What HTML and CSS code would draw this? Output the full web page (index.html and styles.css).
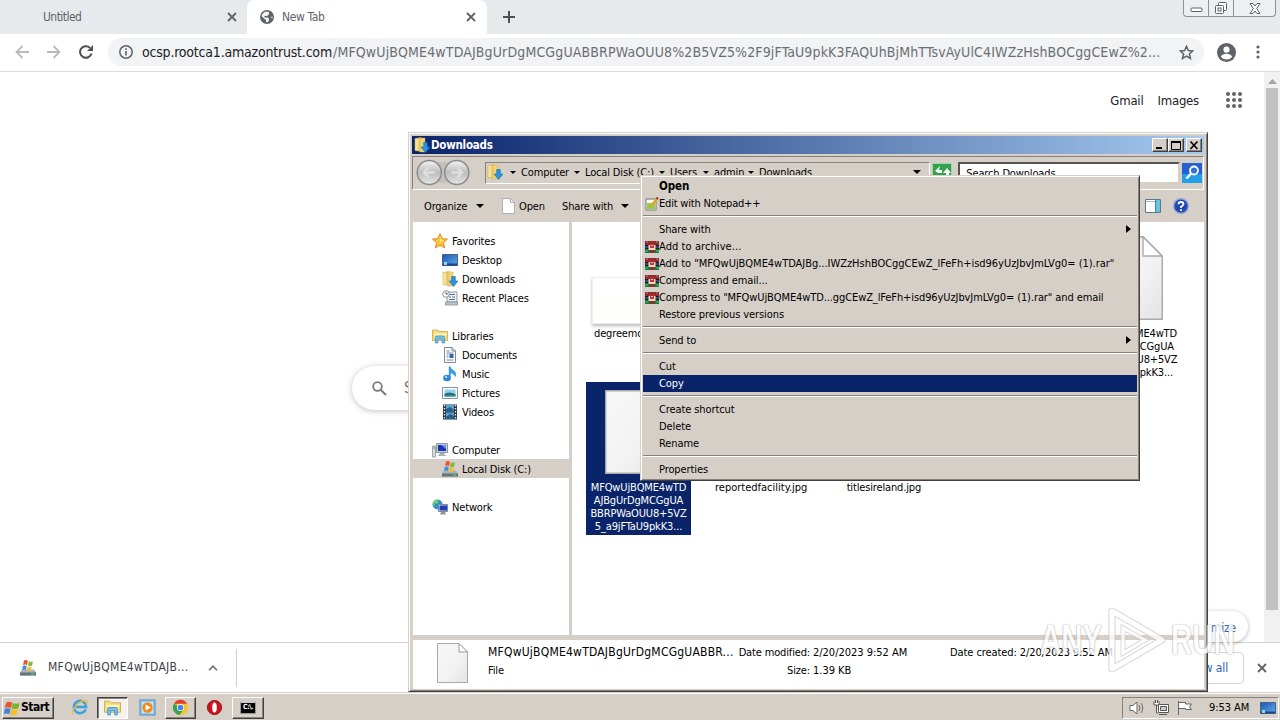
FILE: index.html
```html
<!DOCTYPE html>
<html lang="en">
<head>
<meta charset="utf-8">
<title>New Tab</title>
<link rel="stylesheet" href="styles.css">
</head>
<body>
<svg class="defs" width="0" height="0">
  <defs>
    <linearGradient id="paper" x1="0" y1="0" x2="1" y2="1"><stop offset="0" stop-color="#f8f8f8"/><stop offset=".6" stop-color="#f2f2f2"/><stop offset="1" stop-color="#e3e3e3"/></linearGradient>
    <linearGradient id="fold" x1="0" y1="0" x2="1" y2="0"><stop offset="0" stop-color="#fdf3b4"/><stop offset="1" stop-color="#e2bd4e"/></linearGradient>
    <linearGradient id="screen" x1="0" y1="0" x2="1" y2="1"><stop offset="0" stop-color="#1c55b0"/><stop offset="1" stop-color="#5aaef0"/></linearGradient>
    <linearGradient id="nav" x1="0" y1="0" x2="0" y2="1"><stop offset="0" stop-color="#f4f4f4"/><stop offset=".5" stop-color="#bdbdbd"/><stop offset="1" stop-color="#e6e6e6"/></linearGradient>
    <symbol id="i-down" viewBox="0 0 16 16"><path d="M1 1.500 7 .5v14l-6-1z" fill="url(#fold)" stroke="#c9a545" stroke-width=".6"/><path d="M6 1h5v14H6z" fill="#f0d57b" stroke="#d0ab48" stroke-width=".5"/><path d="M9.700 5.500h3.600V10H16l-4.500 5.500L7 10h2.700z" fill="#2b93e0" stroke="#1766ae" stroke-width=".6"/></symbol>
    <symbol id="i-star" viewBox="0 0 16 16"><path d="M8 .7l2.200 4.900 5.300.5-4 3.600 1.200 5.300L8 12.200 3.300 15l1.200-5.300-4-3.600 5.300-.5z" fill="#ffc337" stroke="#e08a20"/><path d="M8 3.500 9.300 7l3 .3L8 9z" fill="#ffe896"/></symbol>
    <symbol id="i-desk" viewBox="0 0 16 16"><path d="M.5 2.500h15v11H.5z" fill="url(#screen)" stroke="#49627f"/><path d="M1 11.500h14v2H1z" fill="#1c4687"/><path d="M2 10h3v3H2z" fill="#9cd0ef"/></symbol>
    <symbol id="i-recent" viewBox="0 0 16 16"><path d="M5 2h10v10H5z" fill="#eef2f5" stroke="#8d99a5"/><path d="M7 4.500h6M7 7h2m1 0h3M7 9.500h6" stroke="#5d7183"/><path d="M3.500 12h12v3h-12z" fill="#bcc8d0" stroke="#7b8791" stroke-width=".7"/><circle cx="4" cy="4" r="3.300" fill="#fff" stroke="#8b96a0"/><path d="M4 2v2h2" fill="none" stroke="#555"/></symbol>
    <symbol id="i-lib" viewBox="0 0 16 16"><path d="M.5 2h5l1.500 1.500h8.500v9H.5z" fill="#f5dc83" stroke="#c9a446" stroke-width=".8"/><path d="M2 5.500h13v2H2z" fill="#fff3b8"/><path d="M3.500 15V9.500q0-1.500 1.500-1.500h6q1.500 0 1.500 1.500V15H10v-4H6v4z" fill="#6fc0ee" stroke="#3b8cc4" stroke-width=".7"/></symbol>
    <symbol id="i-doc" viewBox="0 0 16 16"><path d="M2.500.5H10L13.500 4v11.500h-11z" fill="#fff" stroke="#7e8b98"/><path d="M10 .5V4h3.500M4.500 4h3m-3 2h7m-7 2h2m-2 2h2m-2 3h7" fill="none" stroke="#6d8499"/><path d="M7.500 7h4v4h-4z" fill="#2f63b0"/></symbol>
    <symbol id="i-music" viewBox="0 0 16 16"><ellipse cx="5" cy="12" rx="3.900" ry="3.300" fill="#2f87d2"/><path d="M6.800 12V.5h1.500q.7 2.500 3.700 4 3.500 2.500 1 7 0-3-4.200-4.500v5z" fill="#3b9be0"/><circle cx="4" cy="11" r="1.200" fill="#a4d8f7"/></symbol>
    <symbol id="i-pic" viewBox="0 0 16 16"><path d="M.5 2.500h15v11H.5z" fill="#fff" stroke="#8394a2"/><path d="M2.500 4.500h11v7h-11z" fill="#8bd0ee"/><path d="M2.500 9q4-3 11 0v2.500h-11z" fill="#286d79"/><path d="M2.500 10.500h11v1h-11z" fill="#53a6a3"/></symbol>
    <symbol id="i-vid" viewBox="0 0 16 16"><path d="M1 .5h14v15H1z" fill="#26333c"/><path d="M4 1h8v6.500H4zM4 8.500h8V15H4z" fill="#58a5d5"/><path d="M4 5l4-2 4 3v1.500H4zM4 13l4-3 4 2v3H4z" fill="#295f86"/><path d="M2.500 1v14M13.500 1v14" stroke="#dfe7ea" stroke-width="1.400" stroke-dasharray="1.500 1.500"/></symbol>
    <symbol id="i-comp" viewBox="0 0 16 16"><path d="M.5 4h3v11h-3z" fill="#d6dadd" stroke="#838b92" stroke-width=".7"/><path d="M1 6h2" stroke="#45b545"/><path d="M4.500 1.500h11v9h-11z" fill="#c9ced3" stroke="#8d959d"/><path d="M6 3h8v6H6z" fill="#1934b8"/><path d="M9 3h5v4z" fill="#5f90ee"/><path d="M8 11h4l2 3H6z" fill="#aab2b9"/></symbol>
    <symbol id="i-disk" viewBox="0 0 16 16"><path d="M2 9.500h12l2 3v3H0v-3z" fill="#a5b2b9"/><path d="M0 12.500h16v3H0z" fill="#65757d"/><path d="M11 14h3" stroke="#55e06a"/><path d="M4 .5q2-1 4 .3L7 5Q5 4 3 5z" fill="#e9572b"/><path d="M9 1.200q2 1 4 0L12 5.500q-2 1-4 0z" fill="#7cb935"/><path d="M2.800 6q2-1 4 0L6 10q-2-1-4 0z" fill="#3c8fdb"/><path d="M7.700 6.500q2 1 4 0l-1 4q-2 1-4 0z" fill="#f6bd29"/></symbol>
    <symbol id="i-net" viewBox="0 0 16 16"><circle cx="5.500" cy="5.500" r="5" fill="#2c8fd0"/><path d="M2 2q3-2 5 0L5 5 3 4 2 8Q0 5 2 2z" fill="#6fd05c"/><path d="M6.500 5.500h9v7h-9z" fill="#d7dce2" stroke="#7e8995"/><path d="M7.500 6.500H15v5H7.500z" fill="#1b3fc0"/><path d="M9 13h4l1 2.500H8z" fill="#8c97a3"/></symbol>
    <symbol id="i-rar" viewBox="0 0 14 14"><path d="M0 1h14v4H0z" fill="#a01f35"/><path d="M0 5h14v4H0z" fill="#2b4a80"/><path d="M0 9h14v4H0z" fill="#167a42"/><path d="M0 5.500h14M0 8.500h14" stroke="#1c1c1c"/><path d="M4.500 1h5v12h-5z" fill="#8a3225"/><path d="M3.500 5h7v5h-7z" fill="#f0d9c5"/><path d="M5 3h1v5H5zm3 0h1v5H8zM6 6h2v2H6z" fill="#d02f30"/><path d="M1 2h2M11 2h2M0 11h3m8 0h3" stroke="#49c06c"/></symbol>
    <symbol id="i-file" viewBox="0 0 67 84"><path d="M.7.7H47L66.300 20v63.300H.7z" fill="url(#paper)" stroke="#a9a9a9" stroke-width="1.400"/><path d="M47 1v19h19z" fill="#fff" stroke="#aaa" stroke-width="1.400"/></symbol>
    <symbol id="i-x" viewBox="0 0 10 10"><path d="M1 1l8 8M9 1 1 9" stroke="#5f6368" stroke-width="1.800"/></symbol>
    <symbol id="i-flag" viewBox="0 0 18 18"><path d="M2.500 3q3.300-2 6.800 0L7.800 9Q4 7.300.8 9z" fill="#e9552b"/><path d="M10 3.500q3.500 1.700 7.500 0L16 9.500q-4 1.500-7.500 0z" fill="#78b72d"/><path d="M.8 10q3.300-1.700 6.700 0L6 16q-3-1.700-6 0z" fill="#3b85d8"/><path d="M8.300 10.500q3.500 1.700 7.400 0L14 16.500q-4 1.500-7.300 0z" fill="#f8bd25"/></symbol>
  </defs>
</svg>

<div class="screen">
  <header class="tabs">
    <div class="tab first"><span class="tab-name t-unt">Untitled</span><svg class="x"><use href="#i-x"/></svg></div>
    <div class="tab active">
      <svg class="globe" viewBox="0 0 14 14"><circle cx="7" cy="7" r="7" fill="#5f6368"/><path d="M6 1.500 9 2v2.500L7 6H4.500v1.500H8L9 9v1.500L7.500 12.500 6 12V10L4 8.500 1.500 6Q2 3 6 1.500zM10.500 7l2-.5v2z" fill="#fff" opacity=".92"/></svg>
      <span class="tab-name">New Tab</span><svg class="x"><use href="#i-x"/></svg>
    </div>
    <svg class="plus" viewBox="0 0 12 12"><path d="M6 0v12M0 6h12" stroke="#4d5156" stroke-width="2"/></svg>
    <div class="caption">
      <span class="c1"><svg width="13" height="6"><rect x="1" y="1" width="11" height="3.500" rx="1" fill="#fff" stroke="#5b626b"/></svg></span>
      <span class="c2"><svg width="14" height="14" fill="#fff" stroke="#5b626b"><rect x="4.500" y="1.500" width="8" height="8" rx="1"/><rect x="1.500" y="4.500" width="8" height="8" rx="1"/><rect x="4" y="7" width="3" height="3"/></svg></span>
      <span class="c3"><svg width="12" height="11" viewBox="0 0 12 11"><path d="M1 .5h3l2 2.500 2-2.500h3L7.700 5.500 11 10.500H8L6 8l-2 2.500H1l3.300-5z" fill="#fff" stroke="#5b626b"/></svg></span>
    </div>
  </header>

  <div class="toolbar">
    <svg class="tb back" viewBox="0 0 14 14"><path d="M14 7H1.500M7.500 1 1.500 7l6 6" fill="none" stroke="#b8babd" stroke-width="1.800"/></svg>
    <svg class="tb fwd" viewBox="0 0 14 14"><path d="M0 7h12.500M6.500 1l6 6-6 6" fill="none" stroke="#b8babd" stroke-width="1.800"/></svg>
    <svg class="tb reload" viewBox="0 0 14 14"><path d="M12.500 8.500A5.800 5.800 0 1 1 11 2.900" fill="none" stroke="#4d5156" stroke-width="2"/><path d="M14 0v6H8z" fill="#4d5156"/></svg>
    <div class="omni">
      <svg class="info" viewBox="0 0 14 14"><circle cx="7" cy="7" r="6.200" fill="none" stroke="#5f6368" stroke-width="1.500"/><path d="M7 6v4.500M7 3.300v1.600" stroke="#5f6368" stroke-width="1.600"/></svg>
      <span class="url"><span class="host">ocsp.rootca1.amazontrust.com</span><span class="path">/MFQwUjBQME4wTDAJBgUrDgMCGgUABBRPWaOUU8%2B5VZ5%2F9jFTaU9pkK3FAQUhBjMhTTsvAyUlC4IWZzHshBOCggCEwZ%2...</span></span>
      <svg class="bm" viewBox="0 0 14 14"><path d="M7 1.200l1.700 3.900 4.200.4-3.200 2.800 1 4.200L7 10.300l-3.700 2.200 1-4.200L1.100 5.500l4.200-.4z" fill="none" stroke="#5f6368" stroke-width="1.400"/></svg>
    </div>
    <svg class="user" viewBox="0 0 18 18"><circle cx="9" cy="9" r="9" fill="#5f6368"/><circle cx="9" cy="6.300" r="2.900" fill="#fff"/><path d="M3.500 13Q5 10.200 9 10.200t5.500 2.800Q12.500 15.600 9 15.600T3.500 13z" fill="#fff"/></svg>
    <svg class="dots" viewBox="0 0 4 14" fill="#5f6368"><circle cx="2" cy="2" r="1.600"/><circle cx="2" cy="7" r="1.600"/><circle cx="2" cy="12" r="1.600"/></svg>
  </div>

  <main class="page">
    <div class="ntp">
      <div class="links"><span>Gmail</span><span>Images</span>
        <svg class="apps" viewBox="0 0 16 16" fill="#5f6368"><circle cx="2" cy="2" r="2"/><circle cx="8" cy="2" r="2"/><circle cx="14" cy="2" r="2"/><circle cx="2" cy="8" r="2"/><circle cx="8" cy="8" r="2"/><circle cx="14" cy="8" r="2"/><circle cx="2" cy="14" r="2"/><circle cx="8" cy="14" r="2"/><circle cx="14" cy="14" r="2"/></svg>
      </div>
      <div class="search"><svg width="15" height="15" viewBox="0 0 15 15"><circle cx="5.500" cy="5.500" r="4.300" fill="none" stroke="#777b80" stroke-width="1.800"/><path d="M8.700 8.700 14 14" stroke="#777b80" stroke-width="2"/></svg><span>S</span></div>
      <div class="customize">mize</div>
    </div>
    <div class="scroll"><svg width="9" height="5"><path d="M4.500 0 9 5H0z" fill="#a3a3a3"/></svg><div class="thumb"></div></div>
  </main>

  <div class="shelf">
    <svg class="s-ico"><use href="#i-disk"/></svg>
    <span class="s-name">MFQwUjBQME4wTDAJB...</span>
    <svg class="chev" viewBox="0 0 10 6"><path d="M1 5.200 5 1.200l4 4" fill="none" stroke="#6b6f74" stroke-width="1.600"/></svg>
    <span class="s-div"></span>
    <span class="showall">Show all</span>
    <svg class="s-x"><use href="#i-x"/></svg>
  </div>

  <footer class="taskbar">
    <div class="start"><svg><use href="#i-flag"/></svg><b>Start</b></div>
    <div class="task flat"><svg viewBox="0 0 18 18"><path d="M15.500 11A6.500 6.500 0 1 1 16 8.500H5" fill="none" stroke="#37a3e3" stroke-width="2.600"/><path d="M2 16Q-.5 14 5 7.500T16 2q1.500.8.300 4" fill="none" stroke="#efb92f" stroke-width="1.400"/></svg></div>
    <div class="task pressed"><svg><use href="#i-lib"/></svg></div>
    <div class="task flat wmp"><svg viewBox="0 0 18 18"><rect x="1" y="1" width="16" height="16" fill="#8cc4ea" stroke="#4f8fc0"/><rect x="3" y="3" width="12" height="12" fill="#c9e3f5"/><circle cx="9" cy="9" r="5.500" fill="#f28b1d"/><path d="M7 5.700 12.500 9 7 12.300z" fill="#fff"/></svg></div>
    <div class="task up"><svg viewBox="0 0 18 18"><circle cx="9" cy="9" r="8" fill="#fbc51d"/><path d="M9 9 2 5a8 8 0 0 0 6 12l4-6z" fill="#35a552"/><path d="M2 5a8 8 0 0 1 14 0H9z" fill="#e1402f"/><circle cx="9" cy="9" r="3.800" fill="#fff"/><circle cx="9" cy="9" r="3" fill="#4586ee"/></svg></div>
    <div class="task flat opera"><svg viewBox="0 0 18 18"><circle cx="9" cy="9" r="7.500" fill="#cc1420" stroke="#93101a"/><ellipse cx="9" cy="9" rx="2.400" ry="5.400" fill="#fff"/></svg></div>
    <div class="task up cmdt"><span class="cmd">C:\.</span></div>
    <div class="tray">
      <svg class="ty1" viewBox="0 0 16 16" fill="#fff" stroke="#666"><path d="M1 5.500h3L8 2v12l-4-3.500H1z"/><path d="M10 5q2 3 0 6m2-8q3.500 5 0 10" fill="none"/></svg>
      <svg class="ty2" viewBox="0 0 16 16" fill="#fff" stroke="#555"><path d="M5.500 4.500h10v8h-10z"/><path d="M7.500 6.500h6v4h-6z" fill="#ccc"/><path d="M6 14.500h8M1 1v4h5V1M3.500 5v8h2M2.500 0v3m2-3v3" /></svg>
      <svg class="ty3" viewBox="0 0 16 16" fill="#fff" stroke="#666"><path d="M1.500 1v14M1.500 2.500h7v1.500h6l-2 3 2 2.500h-6v-1h-7z"/></svg>
      <span class="time">9:53 AM</span>
      <svg class="ty4"><use href="#i-desk"/></svg>
    </div>
  </footer>

  <section class="win">
    <div class="title"><svg><use href="#i-down"/></svg><b>Downloads</b>
      <i class="wb"><svg width="10" height="9"><path d="M1 7h6" stroke="#000" stroke-width="2"/></svg></i><i class="wb"><svg width="10" height="9"><path d="M.5.500v8h9v-8" fill="none" stroke="#000"/><path d="M0 1h10" stroke="#000" stroke-width="2"/></svg></i><i class="wb close"><svg width="10" height="9"><path d="M1.500.5l7 7.500M8.500.5l-7 7.500" stroke="#000" stroke-width="1.600"/></svg></i>
    </div>
    <div class="addr">
      <svg class="bf" viewBox="0 0 56 28"><rect x="10" y="3" width="36" height="21" fill="#c3c0bb"/><circle cx="13.500" cy="13.500" r="12.300" fill="url(#nav)" stroke="#8a8a8a" stroke-width="1.500"/><circle cx="41.500" cy="13.500" r="12.300" fill="url(#nav)" stroke="#8a8a8a" stroke-width="1.500"/><path d="M19 13.500H8m5-5-5 5 5 5M36 13.500h11m-5-5 5 5-5 5" fill="none" stroke="#dedede" stroke-width="2.400"/></svg>
      <div class="crumbs"><svg class="ci"><use href="#i-down"/></svg><i class="dd"></i><span class="k1">Computer</span><i class="dd"></i><span class="k2">Local Disk (C:)</span><i class="dd"></i><span class="k3">Users</span><i class="dd"></i><span class="k4">admin</span><i class="dd"></i><span class="k5">Downloads</span><i class="dd big"></i></div>
      <svg class="go" viewBox="0 0 20 20"><rect width="20" height="20" fill="#2fa24b"/><rect x=".5" y=".5" width="19" height="19" fill="none" stroke="#9ed8a8"/><path d="M3 8l5-5-1 4h3v3H6zM11 10l4-5 4 5h-2v4h-3v-4z" fill="#fff"/></svg>
      <div class="sbox">Search Downloads</div>
      <svg class="mag" viewBox="0 0 20 20"><rect width="20" height="20" fill="#2460d2"/><path d="M0 11h20v9H0z" fill="#249ee6"/><circle cx="12" cy="7.500" r="4" fill="#3a70dd" stroke="#fff" stroke-width="1.800"/><path d="M9 10.500 4.500 15.500" stroke="#fff" stroke-width="2.400"/></svg>
    </div>
    <div class="cmds"><span class="m1">Organize</span><i class="dd big"></i><svg class="of" viewBox="0 0 13 16"><path d="M.5.5h8l4 4v11H.5z" fill="#fff" stroke="#b0b0b0"/><path d="M8.500.5v4h4" fill="none" stroke="#b0b0b0"/></svg><span class="m2">Open</span><span class="m3">Share with</span><i class="dd big"></i>
      <svg class="pane" viewBox="0 0 16 14"><path d="M.5.5h15v13H.5z" fill="#fff" stroke="#5b7890"/><path d="M1 2.500h9" stroke="#a9bac8"/><path d="M10 1h5v12h-5z" fill="#65c5e2"/><path d="M10.500 1v12" stroke="#4d7d99"/></svg>
      <svg class="help" viewBox="0 0 16 16"><circle cx="8" cy="8" r="7.300" fill="#2447b4" stroke="#8fa4d8" stroke-width="1.400"/><path d="M5.500 6.300Q5.500 4 8 4t2.500 2Q10.500 7.300 8 8.800V10M8 11.200v1.800" fill="none" stroke="#fff" stroke-width="1.800"/></svg>
    </div>
    <div class="body">
      <nav class="side">
        <div class="r"><svg><use href="#i-star"/></svg><span>Favorites</span></div>
        <div class="r s"><svg><use href="#i-desk"/></svg><span>Desktop</span></div>
        <div class="r s"><svg><use href="#i-down"/></svg><span>Downloads</span></div>
        <div class="r s"><svg><use href="#i-recent"/></svg><span>Recent Places</span></div>
        <div class="r gap"><svg><use href="#i-lib"/></svg><span>Libraries</span></div>
        <div class="r s"><svg><use href="#i-doc"/></svg><span>Documents</span></div>
        <div class="r s"><svg><use href="#i-music"/></svg><span>Music</span></div>
        <div class="r s"><svg><use href="#i-pic"/></svg><span>Pictures</span></div>
        <div class="r s"><svg><use href="#i-vid"/></svg><span>Videos</span></div>
        <div class="r gap"><svg><use href="#i-comp"/></svg><span>Computer</span></div>
        <div class="r s sel"><svg><use href="#i-disk"/></svg><span>Local Disk (C:)</span></div>
        <div class="r gap"><svg><use href="#i-net"/></svg><span>Network</span></div>
      </nav>
      <div class="files">
        <div class="f"><div class="pic thumbimg"></div><p>degreemodern.jpg</p></div>
        <div class="f"></div><div class="f"></div><div class="f"></div>
        <div class="f"><svg class="pic"><use href="#i-file"/></svg><p>MFQwUjBQME4wTD<br>AJBgUrDgMCGgUA<br>BBRPWaOUU8+5VZ<br>5_a9jFTaU9pkK3...</p></div>
        <div class="f on"><svg class="pic"><use href="#i-file"/></svg><p>MFQwUjBQME4wTD<br>AJBgUrDgMCGgUA<br>BBRPWaOUU8+5VZ<br>5_a9jFTaU9pkK3...</p></div>
        <div class="f"><div class="pic"></div><p class="wide">reportedfacility.jpg</p></div>
        <div class="f"><div class="pic"></div><p>titlesireland.jpg</p></div>
      </div>
    </div>
    <div class="details">
      <svg class="df" viewBox="0 0 31 40"><path d="M.5.500H22L30.500 9v30.500H.5z" fill="url(#paper)" stroke="#a9a9a9"/><path d="M22 .5V9h8.500z" fill="#fff" stroke="#999"/></svg>
      <div class="d1"><p class="n1">MFQwUjBQME4wTDAJBgUrDgMCGgUABBR...</p><p>File</p></div>
      <div class="d2"><p>Date modified:</p><p>Size:</p></div>
      <div class="d3"><p>2/20/2023 9:52 AM</p><p>1.39 KB</p></div>
      <div class="d4"><p>Date created: 2/20/2023 9:52 AM</p></div>
    </div>
  </section>

  <div class="menu">
    <div class="mi"><b>Open</b></div>
    <div class="mi"><svg viewBox="0 0 14 14"><path d="M1 2h10v11H1z" fill="#fff" stroke="#777"/><path d="M2 6h8v6H2z" fill="#8fce4a"/><path d="M2 2h8" stroke="#999" stroke-dasharray="1 1"/><path d="M5 10 12 1.500" stroke="#e6a41d" stroke-width="2.200"/><path d="M11.500 2 13 .5" stroke="#a02828" stroke-width="2"/></svg><span class="q2">Edit with Notepad++</span></div>
    <hr>
    <div class="mi"><span>Share with</span><i class="ar"></i></div>
    <div class="mi"><svg><use href="#i-rar"/></svg><span class="q3">Add to archive...</span></div>
    <div class="mi"><svg><use href="#i-rar"/></svg><span class="q4">Add to "MFQwUjBQME4wTDAJBg...IWZzHshBOCggCEwZ_lFeFh+isd96yUzJbvJmLVg0= (1).rar"</span></div>
    <div class="mi"><svg><use href="#i-rar"/></svg><span>Compress and email...</span></div>
    <div class="mi"><svg><use href="#i-rar"/></svg><span>Compress to "MFQwUjBQME4wTD...ggCEwZ_lFeFh+isd96yUzJbvJmLVg0= (1).rar" and email</span></div>
    <div class="mi"><span>Restore previous versions</span></div>
    <hr>
    <div class="mi"><span>Send to</span><i class="ar"></i></div>
    <hr>
    <div class="mi"><span>Cut</span></div>
    <div class="mi hot"><span>Copy</span></div>
    <hr>
    <div class="mi"><span>Create shortcut</span></div>
    <div class="mi"><span>Delete</span></div>
    <div class="mi"><span>Rename</span></div>
    <hr>
    <div class="mi"><span>Properties</span></div>
  </div>

  <div class="mark"><span class="any">ANY</span><svg viewBox="0 0 58 64"><path d="M4 3 54 32 4 61z" fill="none" stroke="#c9c9c9" stroke-width="7" stroke-linejoin="round"/><path d="M4 3 54 32 4 61z" fill="none" stroke="#fff" stroke-width="5" stroke-linejoin="round"/><path d="M15 20 37 32 15 45z" fill="none" stroke="#d2d2d2" stroke-width="5"/><path d="M15 20 37 32 15 45z" fill="none" stroke="#fff" stroke-width="3"/></svg><span class="run">RUN</span></div>
</div>
</body>
</html>
```
FILE: styles.css
```css
* { box-sizing: border-box; }
body { margin: 0; overflow: hidden; }
p { margin: 0; }
i { font-style: normal; }
svg { display: block; flex: none; }
.defs { position: absolute; }
.screen {
  position: relative; width: 1280px; height: 720px; overflow: hidden;
  display: flex; flex-direction: column; background: #fff; color: #000;
  font: 11px/13px "DejaVu Sans Condensed", "DejaVu Sans", sans-serif;
  font-stretch: condensed; letter-spacing: -0.15px; white-space: nowrap;
}

/* Browser tabs */
.tabs { height: 34px; flex: none; display: flex; background: #e7eaed; }
.tab { display: flex; align-items: center; height: 34px; color: #5f6368; font-size: 12px; }
.tab.first { width: 247px; padding: 0 10px 0 43px; }
.tab.active { width: 240px; padding: 0 11px 0 13px; background: #fff; border-radius: 8px 8px 0 0; }
.tab-name { flex: 1; letter-spacing: -0.35px; }
.t-unt { letter-spacing: -0.55px; }
.globe { width: 14px; height: 14px; margin-right: 8px; }
.x { width: 10px; height: 10px; }
.plus { width: 12px; height: 12px; margin: 11px 0 0 16px; }
.caption { margin-left: auto; margin-right: 4px; display: flex; width: 93px; height: 17px; border: 1px solid #8d9299; border-top: 0; border-radius: 0 0 4px 4px; background: #edf0f2; }
.caption span { display: flex; justify-content: center; border-right: 1px solid #8d9299; }
.c1 { width: 25px; padding-top: 7px; } .c2 { width: 25px; padding-top: 1px; }
.caption .c3 { flex: 1; border: 0; padding-top: 3px; }

.toolbar { height: 38px; flex: none; display: flex; align-items: center; padding-bottom: 1px; border-bottom: 1px solid #d9dbdd; }
.tb { width: 14px; height: 14px; }
.back { margin-left: 15px; } .fwd { margin-left: 18px; } .reload { margin-left: 18px; }
.omni { width: 1096px; height: 28px; margin-left: 15px; border-radius: 14px; background: #f1f3f4; display: flex; align-items: center; padding-left: 11px; }
.info { width: 14px; height: 14px; margin-right: 9px; }
.url { width: 1038px; font-size: 14px; line-height: 20px; display: flex; }
.host { letter-spacing: -0.2px; width: 191px; color: #202124; }
.path { color: #6b6f74; letter-spacing: 0.14px; }
.bm { width: 15px; height: 15px; margin-left: -1px; }
.user { width: 19px; height: 19px; margin-left: 13px; }
.dots { width: 4px; height: 14px; margin-left: 20px; }

/* New tab page */
.page { height: 570px; flex: none; display: flex; }
.ntp { flex: 1; position: relative; }
.links { display: flex; justify-content: flex-end; align-items: center; height: 56px; padding-right: 22px; font-size: 13px; letter-spacing: -0.2px; color: #202124; gap: 14px; }
.apps { width: 16px; height: 16px; margin-left: 13px; }
.search { position: absolute; left: 352px; top: 294px; width: 562px; height: 44px; border-radius: 22px; box-shadow: 0 1px 6px rgba(32,33,36,.28); display: flex; align-items: center; padding-left: 20px; gap: 17px; font-size: 15px; color: #757575; }
.customize { position: absolute; right: 16px; bottom: 0; width: 110px; height: 31px; border-radius: 16px; box-shadow: 0 1px 4px rgba(0,0,0,.3); font-size: 12px; line-height: 34px; text-align: right; padding-right: 12px; color: #2765ba; }
.scroll { width: 16px; background: #f1f1f1; padding: 7px 2px 0; display: flex; flex-direction: column; align-items: center; }
.thumb { width: 12px; height: 522px; margin-top: 4px; background: #c1c1c1; }

.shelf { height: 50px; flex: none; border-top: 1px solid #d3d3d3; display: flex; align-items: center; }
.s-ico { width: 16px; height: 16px; margin-left: 20px; }
.s-name { width: 140px; margin-left: 12px; font-size: 12px; letter-spacing: 0.3px; color: #3c4043; }
.chev { width: 10px; height: 6px; margin-left: 20px; }
.s-div { width: 1px; height: 38px; margin-left: 18px; background: #d0d0d0; }
.showall { margin-left: auto; width: 80px; height: 32px; border: 1px solid #d5d7da; border-radius: 4px; color: #2765ba; font-size: 12px; line-height: 30px; text-align: right; padding-right: 15px; }
.s-x { width: 10px; height: 10px; margin: 0 13px; }

/* Taskbar */
.taskbar { height: 28px; flex: none; background: #d6cfc7; border-top: 1px solid #d6cfc7; box-shadow: inset 0 1px #fff; display: flex; align-items: center; padding: 2px 1px 0 2px; }
.start, .up { border: 1px solid; border-color: #fff #404040 #404040 #fff; box-shadow: inset -1px -1px #87827c; }
.start { width: 52px; height: 22px; display: flex; align-items: center; font-size: 12px; letter-spacing: -0.5px; }
.start svg { width: 16px; height: 16px; margin: 0 1px; }
.task { width: 31px; height: 22px; display: flex; align-items: center; justify-content: center; }
.task svg { width: 17px; height: 17px; }
.task.flat { margin-left: 8px; width: 34px; }
.task.pressed { border: 1px solid; border-color: #404040 #fff #fff #404040; box-shadow: inset 1px 1px #87827c; background: #f4f1ee; margin-left: 1px; }
.task.wmp { margin-left: 2px; } .task.up { margin-left: 1px; } .task.opera { margin-left: 1px; } .task.cmdt { width: 32px; margin-left: 1px; }
.cmd { width: 16px; height: 13px; background: #000; border: 1px solid #999; border-top: 2px solid #ccc; color: #fff; font: bold 7px/9px "DejaVu Sans Condensed", sans-serif; letter-spacing: -0.5px; text-align: center; }
.tray { margin-left: auto; width: 157px; height: 22px; border: 1px solid; border-color: #87827c #fff #fff #87827c; display: flex; align-items: center; padding-left: 6px; }
.tray svg { width: 16px; height: 16px; }
.ty2 { margin-left: 8px; } .ty3 { margin-left: 8px; }
.time { width: 41px; margin: 0 10px 0 16px; letter-spacing: -0.05px; }

/* Explorer window */
.win { position: absolute; left: 408px; top: 132px; width: 800px; height: 560px; background: #d6cfc7; border: 1px solid; border-color: #d6cfc7 #404040 #404040 #d6cfc7; box-shadow: inset 1px 1px #fff, inset -1px -1px #87827c; padding: 3px; display: flex; flex-direction: column; }
.title { height: 18px; flex: none; background: linear-gradient(90deg, #0a246a, #a6caf0); color: #fff; display: flex; align-items: center; padding: 0 2px; }
.title svg { width: 16px; height: 16px; }
.title b { flex: 1; margin-left: 1px; letter-spacing: -0.25px; font-size: 11.500px; }
.wb { width: 16px; height: 14px; background: #d6cfc7; border: 1px solid; border-color: #fff #404040 #404040 #fff; box-shadow: inset -1px -1px #87827c; padding: 2px 0 0 2px; }
.wb svg { width: 10px; height: 9px; }
.close { margin-left: 2px; }
.addr { height: 34px; flex: none; margin-top: 2px; border: 1px solid; border-color: #87827c #fff #fff #87827c; display: flex; align-items: center; padding: 0 1px 0 3px; }
.bf { width: 55px; height: 28px; }
.crumbs { height: 22px; width: 446px; margin-left: 14px; border: 1px solid #87827c; border-color: #87827c #fff #fff #87827c; display: flex; align-items: center; padding: 0 0 2px 1px; }
.ci { width: 16px; height: 16px; margin-right: 7px; }
.dd { border: 3px solid transparent; border-top-color: #000; border-bottom: 0; }
.dd.big { border-width: 4px 4px 0; }
.crumbs span { margin: 0 5px; }
.k1 { width: 48px; } .k2 { width: 69px; } .k3 { width: 28px; } .k4 { width: 29px; } .k5 { width: 54px; }
.crumbs .big { margin-left: auto; margin-right: 8px; }
.go { width: 20px; height: 20px; margin-left: 2px; }
.sbox { width: 222px; height: 22px; margin-left: 6px; background: #fff; border: 2px solid; border-color: #555 #d6cfc7 #d6cfc7 #555; padding: 3px 0 0 6px; }
.mag { width: 20px; height: 20px; margin-left: 2px; }
.cmds { height: 32px; flex: none; display: flex; align-items: center; padding-left: 12px; }
.m1 { width: 43px; margin-right: 9px; }
.of { width: 13px; height: 16px; margin: 0 4px 0 18px; }
.m2 { width: 43px; } .m3 { width: 52px; margin-right: 7px; }
.pane { width: 16px; height: 14px; margin-left: auto; } .help { width: 16px; height: 16px; margin: 0 15px 0 12px; }
.body { height: 413px; flex: none; display: flex; }
.side { width: 156px; margin-left: 1px; background: #fff; padding-top: 9px; }
.r { height: 19px; display: flex; align-items: center; padding-left: 19px; }
.r.s { padding-left: 29px; } .r.gap { margin-top: 19px; }
.r.sel { background: #d6cfc7; }
.r svg { width: 16px; height: 16px; margin-right: 4px; }
.r span { padding-top: 2px; }
.files { flex: 1; margin-left: 3px; background: #fff; padding: 6px 0 0 14px; display: grid; grid-template-columns: repeat(5, 105px); column-gap: 17.7px; grid-template-rows: 154px 153px; overflow: hidden; }
.f { text-align: center; height: 153px; padding-top: 8px; }
.f .pic { width: 67px; height: 84px; margin: 0 auto 7px; }
.f .thumbimg { width: 94px; height: 47px; margin: 41px auto 3px; background: linear-gradient(#fff, #fefefc); border: 1px solid #eee; box-shadow: 0 2px 3px #bbb; }
.f.on { background: #0a246a; color: #fff; }
.wide { letter-spacing: 0; }
.details { height: 49px; flex: none; margin: 5px 0 0 1px; background: #fff; display: flex; padding: 3px 0 0 24px; }
.df { width: 31px; height: 40px; }
.details p { height: 18px; line-height: 19px; }
.d1 { width: 245px; margin-left: 20px; }
.details .n1 { font-size: 12px; letter-spacing: 0.22px; }
.d2 { width: 77px; text-align: right; }
.d3 { width: 100px; margin-left: 3px; letter-spacing: -0.02px; }
.d4 { margin-left: 37px; letter-spacing: -0.08px; }

/* Context menu */
.menu { position: absolute; left: 640px; top: 175px; width: 500px; height: 306px; background: #d6cfc7; border: 1px solid; border-color: #d6cfc7 #404040 #404040 #d6cfc7; box-shadow: inset 1px 1px #fff, inset -1px -1px #87827c; padding: 2px; letter-spacing: -0.1px; }
.mi { height: 17px; display: flex; align-items: center; padding-left: 16px; }
.mi svg { width: 14px; height: 14px; margin: 0 0 0 -14px; }
.mi:first-child b { font-size: 11.500px; }
.q2 { letter-spacing: -0.2px; } .q3 { letter-spacing: 0.08px; } .q4 { letter-spacing: -0.03px; }
.hot { background: #0a246a; color: #fff; }
.menu hr { height: 2px; margin: 3px 0 4px; border: 0; background: linear-gradient(#87827c 50%, #fff 50%); }
.ar { margin-left: auto; margin-right: 6px; border: 4px solid transparent; border-left: 5px solid #000; border-right: 0; position: relative; top: -1px; }

/* Watermark */
.mark { position: absolute; left: 1040px; top: 607px; width: 200px; height: 66px; display: flex; align-items: center; opacity: .8; font: bold 42px/66px "Liberation Sans", sans-serif; letter-spacing: 0; color: #fff; text-shadow: 0 0 2px #999, 0 0 1px #999; }
.mark svg { width: 58px; height: 64px; }
.any, .run { transform-origin: left; transform: scaleX(.7); }
.any { width: 68px; } .run { margin-left: 5px; }
```
